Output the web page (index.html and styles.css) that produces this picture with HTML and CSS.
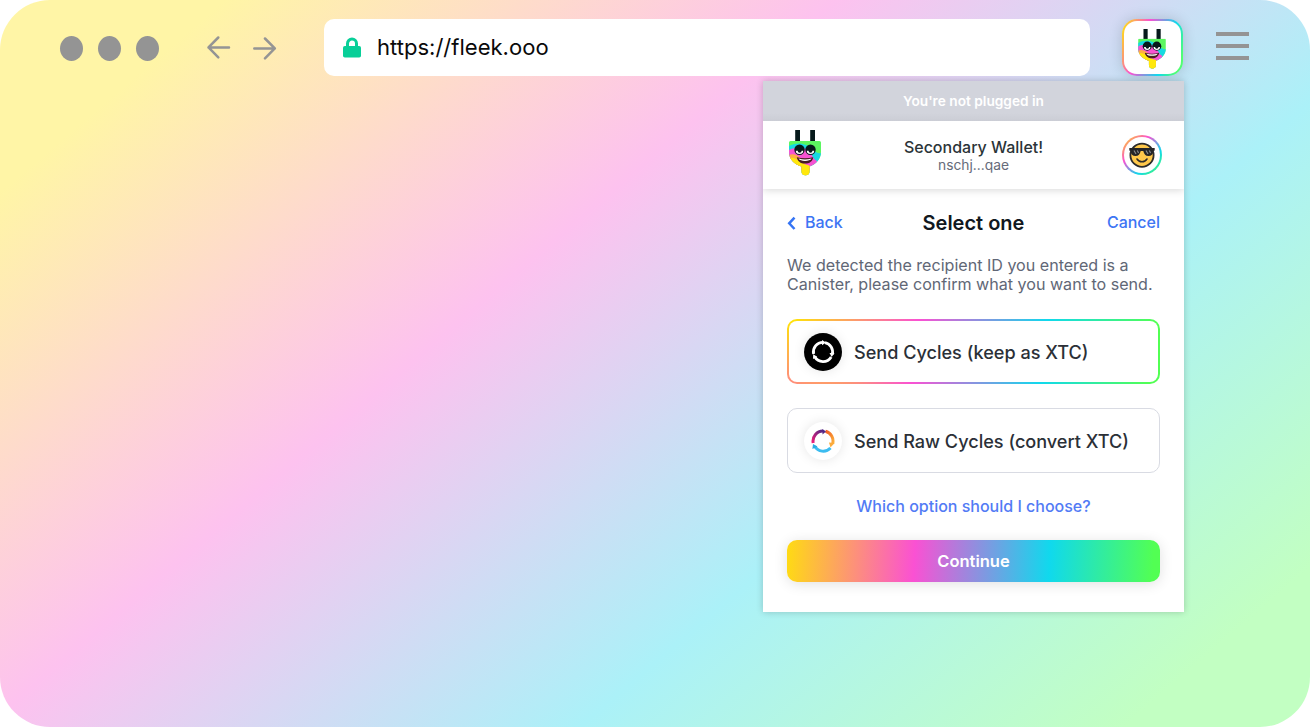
FILE: index.html
```html
<!DOCTYPE html>
<html lang="en">
<head>
<meta charset="utf-8">
<title>Plug</title>
<link rel="stylesheet" href="styles.css">
</head>
<body>
<svg class="defs" width="0" height="0" aria-hidden="true">
  <defs>
    <clipPath id="bodyClip"><path d="M1.500 11H30.500Q32 11 32 12.500V22C32 29 27 34 20.500 36.500V41.300A4 4 0 0 1 12.500 41.300V36.500C5 34 0 29 0 22V12.500Q0 11 1.500 11Z"/></clipPath>
    <symbol id="plug" viewBox="0 0 32 46">
      <rect x="6.200" y="0" width="4.800" height="12" fill="#06191b"/>
      <rect x="21.200" y="0" width="4.800" height="12" fill="#06191b"/>
      <g clip-path="url(#bodyClip)">
        <rect y="11" width="32" height="35" fill="#5cf660"/>
        <path d="M0 16C5 13 12 12.500 17 15C24 18 28 25 32 23V46H0Z" fill="#16d9e2"/>
        <path d="M0 20C6 17 16 17 20 21C24 26 24 29 28 31L26 40H0Z" fill="#f653d2"/>
        <path d="M0 25C7 22 12 28 15 33C18 36 20 35 22 38V46H0Z" fill="#ffae45"/>
        <path d="M0 28C7 26 11 33 16 34.500C20 35 21 36 23 38V46H0Z" fill="#ffe80c"/>
      </g>
      <circle cx="10.500" cy="19.700" r="5.200" fill="#06191b"/>
      <circle cx="21.500" cy="19.700" r="5.200" fill="#06191b"/>
      <path d="M6.800 20.800H14.200A3.700 3.300 0 0 1 6.800 20.800ZM17.800 20.800H25.200A3.700 3.300 0 0 1 17.800 20.800Z" fill="#fff"/>
      <path d="M8.800 20H12.600V21A1.900 1.700 0 0 1 8.800 21ZM19.600 20H23.400V21A1.900 1.700 0 0 1 19.600 21Z" fill="#06191b"/>
      <path d="M7.800 27.200C13 28.700 19 28.700 24.200 27.200C24 31 20.500 33.600 16 33.600S8.400 31 7.800 27.200Z" fill="#451b22"/>
      <path d="M9.500 28.500C14 29.700 18 29.700 22.600 28.500C21.500 30.300 19 30.900 16 30.900S10.500 30.300 9.500 28.500Z" fill="#fff"/>
    </symbol>
  </defs>
</svg>
<div class="browser">
  <header class="toolbar">
    <div class="dots"><i></i><i></i><i></i></div>
    <svg class="arrows" width="72" height="26" viewBox="0 0 72 26" fill="none" stroke="#949494" stroke-width="2.500" stroke-linecap="round" stroke-linejoin="round">
      <path d="M24 12.400H3.500M13.300 2.500L3.500 12.400L13.300 22.300"/>
      <path d="M49.300 13.400H69.800M60 3.500L69.800 13.400L60 23.300"/>
    </svg>
    <div class="address">
      <svg width="18" height="21" viewBox="0 0 18 21"><path d="M4.500 10V6.500a4.500 4.500 0 0 1 9 0V10" fill="none" stroke="#08cf98" stroke-width="3"/><rect y="9" width="18" height="11.500" rx="1.800" fill="#08cf98"/></svg>
      <span>https://fleek.ooo</span>
    </div>
    <div class="extension"><svg width="28" height="40"><use href="#plug"/></svg></div>
    <div class="menu"><i></i><i></i><i></i></div>
  </header>

  <main class="popup">
    <div class="status">You're not plugged in</div>
    <div class="account">
      <svg class="logo" width="32" height="46"><use href="#plug"/></svg>
      <div class="wallet"><div class="name">Secondary Wallet!</div><div class="id">nschj...qae</div></div>
      <div class="avatar">
        <svg width="26" height="26" viewBox="0 0 26 26">
          <circle cx="13" cy="13.200" r="11.600" fill="#ffc84b" stroke="#2d2c2c" stroke-width="1.800"/>
          <path d="M.3 6H25.700V8.500L24.500 9C24 12.500 22.500 14 19.500 14C16.500 14 15 12 14.300 9H11.700C11 12 9.500 14 6.500 14C3.500 14 2 12.500 1.500 9L.3 8.500Z" fill="#252527"/>
          <path d="M5 8.500L7 12M8.300 8.500L9.600 11M17 8.500L19 12M20.300 8.500L21.600 11" stroke="#85888c" stroke-width="1.200"/>
          <path d="M8 17C10.200 20.700 15.800 20.700 18 17" fill="none" stroke="#2d2c2c" stroke-width="1.500" stroke-linecap="round"/>
        </svg>
      </div>
    </div>
    <section class="content">
      <div class="heading">
        <a class="back"><svg width="9" height="14" viewBox="0 0 9 14"><path d="M7.500 1.600L2.200 7.300L7.500 13" fill="none" stroke="#3574f4" stroke-width="2.500"/></svg><span>Back</span></a>
        <h1>Select one</h1>
        <a class="cancel">Cancel</a>
      </div>
      <p class="message">We detected the recipient ID you entered is a<br>Canister, please confirm what you want to send.</p>
      <div class="option selected">
        <div class="token dark">
          <svg width="24" height="24" viewBox="0 0 24 24" fill="none" stroke="#fff" stroke-width="2.800">
            <path d="M2.600 14A9.600 9.600 0 0 1 12 2.400M14 2.600A9.600 9.600 0 0 1 21.300 14.500M20.200 17A9.600 9.600 0 0 1 3.700 16.800"/>
            <path d="M11 0L15 2.600L11 5.200ZM23.500 13L20.700 17L18.500 13ZM2 19L2.200 14.200L6.200 16.800Z" fill="#fff" stroke="none"/>
          </svg>
        </div>
        <span>Send Cycles (keep as XTC)</span>
      </div>
      <div class="option">
        <div class="token">
          <svg width="24" height="24" viewBox="0 0 24 24" fill="none" stroke-width="3">
            <defs>
              <linearGradient id="purple" x1="0" y1="1" x2="1" y2="0"><stop stop-color="#ed1e79"/><stop offset="1" stop-color="#522785"/></linearGradient>
              <linearGradient id="orange" x1="0" y1="0" x2="1" y2="1"><stop stop-color="#f15a24"/><stop offset="1" stop-color="#fbb03b"/></linearGradient>
            </defs>
            <path d="M2.200 14A10 10 0 0 1 12 2.100" stroke="url(#purple)"/>
            <path d="M14.500 2.300A10 10 0 0 1 21.600 14.800" stroke="url(#orange)"/>
            <path d="M19.500 19A10 10 0 0 1 3.600 17.300" stroke="#3cbcf0"/>
            <path d="M11.500 0L15 2.500L11.500 5.500Z" fill="#522785"/><path d="M23.500 14L19.500 18.500L18 13.500Z" fill="#fbab3b"/><path d="M1.400 20L2 15L6.500 17.500Z" fill="#29abe2"/>
          </svg>
        </div>
        <span>Send Raw Cycles (convert XTC)</span>
      </div>
      <a class="help">Which option should I choose?</a>
      <button class="continue">Continue</button>
    </section>
  </main>
</div>
</body>
</html>
```
FILE: styles.css
```css
* { box-sizing: border-box; }
body { margin: 0; background: #fff; font-family: Inter, sans-serif; }
.defs { position: absolute; }
.browser {
  width: 1310px; height: 727px; border-radius: 50px; overflow: hidden;
  background: linear-gradient(139.5deg, #fff5a6 10.4%, #fdc2ef 38.7%, #abf1f8 66.2%, #c2ffc2 91.4%);
}
.toolbar { display: flex; align-items: flex-start; height: 81px; padding: 19px 0 0 60px; }
.dots { display: flex; gap: 15px; margin-top: 17px; }
.dots i { width: 23px; height: 25px; border-radius: 50%; background: #949494; }
.arrows { margin: 16px 0 0 46px; }
.address {
  display: flex; align-items: center; gap: 16px; width: 766px; height: 57px;
  margin-left: 47px; padding-left: 19px; border-radius: 10px; background: #fff;
  font-size: 22.05px; color: #0a0a0a;
}
.address span { padding-bottom: 2px; }
.extension {
  display: flex; align-items: center; justify-content: center; width: 61px; height: 57px;
  margin-left: 32px; padding: 3px 1px 0 0; border: 2px solid transparent; border-radius: 15px;
  background: linear-gradient(#fff, #fff) padding-box,
    linear-gradient(110deg, #ffd91a 5%, #fa51d3 34.7%, #10d9ed 68.4%, #52ff73 90%) border-box;
  box-shadow: 0 0 14px rgba(0, 0, 0, .16);
}
.menu { display: flex; flex-direction: column; gap: 8px; margin: 13px 0 0 33px; }
.menu i { width: 33px; height: 4px; background: #949494; }
.popup {
  display: flex; flex-direction: column; width: 421px; height: 531px; margin-left: 763px;
  background: #fff; box-shadow: 0 0 7px rgba(0, 0, 0, .2);
}
.status {
  height: 40px; background: linear-gradient(#d2d4dc 80%, #cbcdd5);
  color: #fff; font-size: 13.7px; font-weight: 600; line-height: 40px; text-align: center;
}
.account {
  display: grid; grid-template-columns: 40px 1fr 40px; height: 68px; padding: 0 22px 0 26px;
  box-shadow: 0 1px 8px rgba(0, 0, 0, .16); clip-path: inset(0 0 -12px 0);
}
.logo { margin-top: 9px; }
.wallet { padding: 16px 4px 0 0; text-align: center; }
.name { color: #2b3438; font-size: 16px; font-weight: 500; line-height: 20px; }
.id { color: #666b7a; font-size: 13.8px; line-height: 16px; }
.avatar {
  display: flex; align-items: center; justify-content: center; width: 40px; height: 40px;
  margin-top: 14px; border: 2px solid transparent; border-radius: 50%;
  background: linear-gradient(#fff, #fff) padding-box,
    linear-gradient(135deg, #ffe702, #fa51d3 35%, #10d9ed 68%, #52ff53) border-box;
}
.content { display: flex; flex-direction: column; padding: 20px 24px 0; }
.heading { display: grid; grid-template-columns: 80px 1fr 80px; align-items: center; height: 28px; }
.heading h1 { margin: 0; color: #111820; font-size: 20px; font-weight: 600; text-align: center; }
.back { display: flex; align-items: center; gap: 9px; }
.back, .cancel { color: #3d75f4; font-size: 16px; font-weight: 500; }
.back span, .cancel { padding-bottom: 2px; }
.cancel { text-align: right; }
.message { margin: 19px 0 25px; color: #616776; font-size: 16.08px; line-height: 19px; white-space: nowrap; }
.option {
  display: flex; align-items: center; gap: 12px; height: 65px; margin-bottom: 24px; padding: 0 16px;
  border: 1px solid #d9dbe3; border-radius: 10px; color: #2b3037; font-size: 18.08px; font-weight: 500;
}
.selected {
  padding: 0 15px; border: 2px solid transparent;
  background: linear-gradient(#fff, #fff) padding-box,
    linear-gradient(40deg, rgba(255, 125, 145, .9), rgba(255, 150, 120, 0) 18%) border-box,
    linear-gradient(97deg, #ffe702 .6%, #fa51d3 34.7%, #10d9ed 68.4%, #52ff53 97%) border-box;
}
.token {
  display: flex; align-items: center; justify-content: center; width: 38px; height: 38px;
  border-radius: 50%; background: #fff; box-shadow: 0 0 12px rgba(0, 0, 0, .1);
}
.dark { background: #000; }
.help { color: #527bf5; font-size: 16px; font-weight: 500; line-height: 18px; text-align: center; }
.continue {
  height: 42px; margin-top: 25px; padding: 0; border: 0; border-radius: 10px;
  background: linear-gradient(93deg, #ffe702 -3%, #fa51d3 34.2%, #10d9ed 70.3%, #52ff53 98%);
  box-shadow: 0 2px 14px rgba(0, 0, 0, .12); color: #fff; font: 600 16.5px Inter, sans-serif;
}
```
